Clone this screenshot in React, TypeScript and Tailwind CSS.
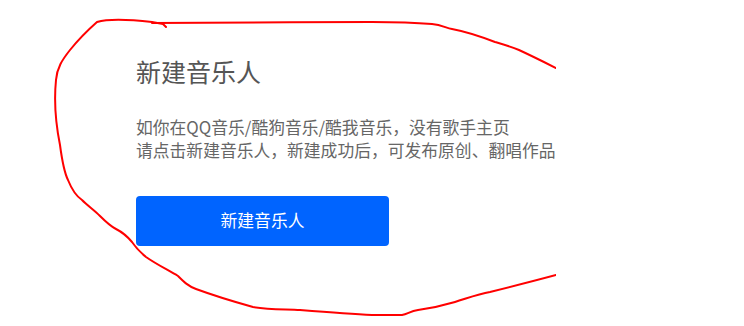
const stroke = "#ff0000";

function Scribble() {
  return (
    <svg
      className="pointer-events-none absolute left-0 top-0"
      width="556"
      height="326"
      viewBox="0 0 556 326"
      fill="none"
    >
      <path
        d="M166,27 L163,24 L152,22 C135,20 110,18 97,22 C88,30 78,40 70,50 C62,60 57,68 56,80 C54,100 56,125 60,145 C62,160 64,172 68,180 C72,190 76,196 82,200 C88,206 94,210 100,216 C106,222 110,226 116,229 C122,232 127,236 132,242 C136,248 140,252 146,257 C156,264 168,270 178,276 C184,282 188,286 196,289 C215,296 235,302 253,307 C270,310 288,309 300,310 C325,312 350,314 372,315 L402,315 C408,314 410,311 418,310 C432,308 445,305 455,302 C468,298 478,294 490,292 C510,287 530,282 556,275"
        stroke={stroke}
        strokeWidth="2"
        strokeLinecap="round"
        strokeLinejoin="round"
      />
      <path
        d="M152,23 C200,23 300,22 372,22 C400,22 420,23 432,24 C442,25 446,28 452,29 C468,32 482,37 495,42 C505,45 512,47 519,50 C532,56 544,62 556,68"
        stroke={stroke}
        strokeWidth="2"
        strokeLinecap="round"
        strokeLinejoin="round"
      />
    </svg>
  );
}

export default function App() {
  return (
    <div
      className="h-[326px] w-[744px] bg-white"
      style={{ fontFamily: '"Noto Sans CJK SC", "Liberation Sans", sans-serif' }}
    >
      <div className="relative h-[326px] w-[556px] overflow-hidden">
        <div className="flex flex-col pl-[136px] pt-[54px]">
          <h2 className="text-[25px] leading-[34px] text-[#555555]">新建音乐人</h2>
          <div className="mt-[28px] whitespace-nowrap text-[16.8px] leading-[23px] text-[#666666]">
            <p>如你在QQ音乐/酷狗音乐/酷我音乐，没有歌手主页</p>
            <p>请点击新建音乐人，新建成功后，可发布原创、翻唱作品</p>
          </div>
          <button className="mt-[34px] flex h-[50px] w-[253px] items-center justify-center rounded-[4px] bg-[#0064ff] text-[16.8px] text-white">
            新建音乐人
          </button>
        </div>
        <Scribble />
      </div>
    </div>
  );
}
